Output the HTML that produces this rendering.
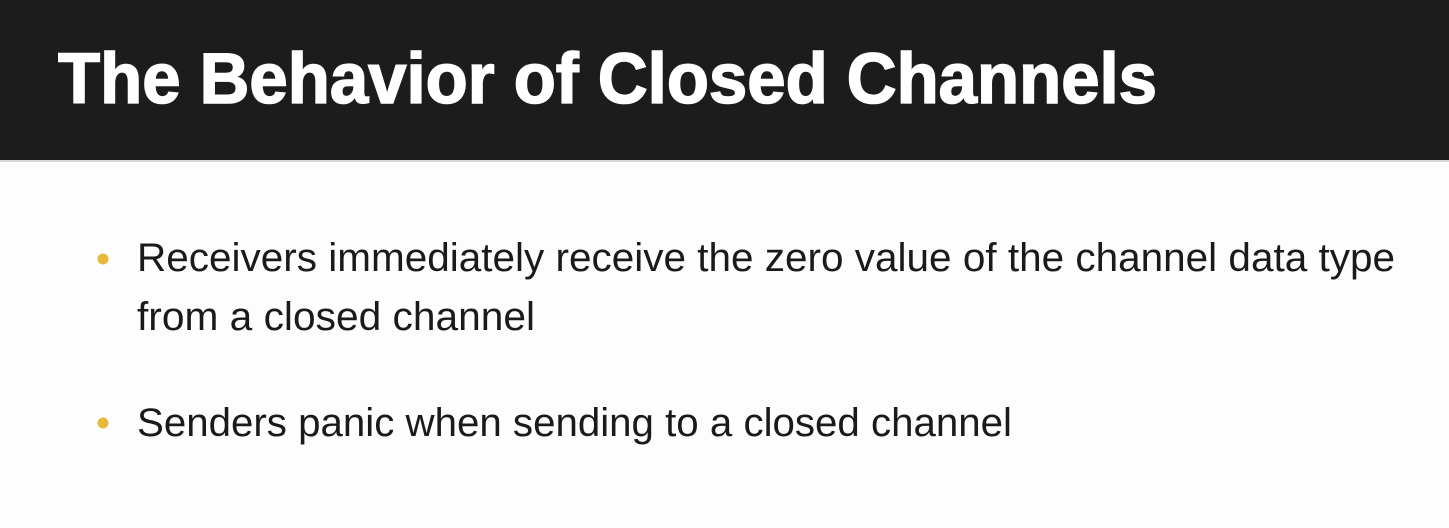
<!DOCTYPE html>
<html><head><meta charset="utf-8"><style>
html,body{margin:0;padding:0;width:1449px;height:528px;overflow:hidden;background:#fdfdfd}
svg{display:block}
</style></head><body>
<svg width="1449" height="528" xmlns="http://www.w3.org/2000/svg">
<rect x="0" y="0" width="1449" height="528" fill="#fdfdfd"/>
<rect x="0" y="0" width="1449" height="160" fill="#1c1c1c"/>
<rect x="0" y="160" width="1449" height="2" fill="#d8d8d8"/>
<text x="58" y="103" font-family="Liberation Sans, sans-serif" font-weight="bold" font-size="71" fill="#ffffff" stroke="#ffffff" stroke-width="1.6" textLength="1099" lengthAdjust="spacingAndGlyphs">The Behavior of Closed Channels</text>
<circle cx="103" cy="259" r="5.5" fill="#e6b93a"/>
<circle cx="103" cy="423" r="5.5" fill="#e6b93a"/>
<g font-family="Liberation Sans, sans-serif" font-size="40" fill="#1a1a1a">
<text x="137" y="271" textLength="1258" lengthAdjust="spacingAndGlyphs">Receivers immediately receive the zero value of the channel data type</text>
<text x="137" y="330" textLength="398" lengthAdjust="spacingAndGlyphs">from a closed channel</text>
<text x="137" y="436" textLength="875" lengthAdjust="spacingAndGlyphs">Senders panic when sending to a closed channel</text>
</g>
</svg>
</body></html>
